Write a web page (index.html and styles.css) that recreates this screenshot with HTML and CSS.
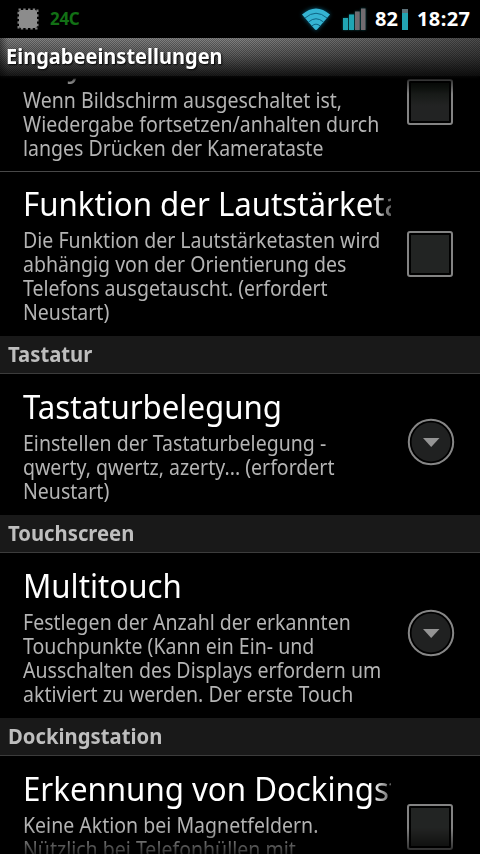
FILE: index.html
```html
<!DOCTYPE html>
<html lang="de">
<head>
    <meta charset="UTF-8">
    <meta name="viewport" content="width=device-width, initial-scale=1.0">
    <title>Eingabeeinstellungen</title>
    <link rel="stylesheet" href="styles.css">
</head>
<body>
    <div class="status-bar">
        <svg class="chip" width="24" height="24" viewBox="0 0 24 24">
            <rect x="2.500" y="2.500" width="19" height="19" fill="none" stroke="#808080" stroke-width="2" stroke-dasharray="2.400 2.350"/>
            <rect x="3" y="3" width="18" height="18" rx="2" fill="#8c8c8c"/>
        </svg>
        <span class="temp">24C</span>
        <svg class="wifi" width="32" height="26" viewBox="0 0 32 26">
            <path d="M2 8.500Q16-3.500 30 8.500L17.500 23Q16 25 14.500 23Z" fill="#35b4d3"/>
            <path d="M5 12Q16 2.500 27 12M8.500 16Q16 9.500 23.500 16M12 19.800Q16 16.500 20 19.800" fill="none" stroke="#0e6484" stroke-width="1"/>
        </svg>
        <svg class="signal" width="24" height="23" viewBox="0 0 24 23">
            <path d="M1 10h5v12H1zM7 6.500h5V22H7z" fill="#20a5b3"/>
            <path d="M13 3.500h4.700V22H13zM19 .500h4.500V22H19z" fill="#716b70"/>
        </svg>
        <span class="percent">82</span>
        <span class="battery"></span>
        <span class="clock">18:27</span>
    </div>
    <div class="title-bar"><h1>Eingabeeinstellungen</h1></div>

    <div class="list">
        <div class="row scrolled">
            <div class="text">
                <div class="name"><span>Play/Pause</span></div>
                <p>Wenn Bildschirm ausgeschaltet ist,<br>Wiedergabe fortsetzen/anhalten durch<br>langes Drücken der Kamerataste</p>
            </div>
            <span class="checkbox under-title"></span>
        </div>
        <div class="row divided">
            <div class="text">
                <div class="name long"><span>Funktion der Lautstärketasten</span></div>
                <p>Die Funktion der Lautstärketasten wird<br>abhängig von der Orientierung des<br>Telefons ausgetauscht. (erfordert<br>Neustart)</p>
            </div>
            <span class="checkbox"></span>
        </div>

        <h2><span>Tastatur</span></h2>
        <div class="row">
            <div class="text">
                <div class="name"><span>Tastaturbelegung</span></div>
                <p>Einstellen der Tastaturbelegung -<br>qwerty, qwertz, azerty... (erfordert<br>Neustart)</p>
            </div>
            <svg class="more" width="48" height="48" viewBox="0 0 48 48">
                <circle cx="24" cy="24" r="22.200" fill="#000" stroke="#868686" stroke-width="2"/>
                <circle cx="24" cy="24" r="19.500" fill="#202121"/>
                <path d="M16 20h16.500L24.200 29Z" fill="#949494"/>
            </svg>
        </div>

        <h2><span>Touchscreen</span></h2>
        <div class="row">
            <div class="text">
                <div class="name"><span>Multitouch</span></div>
                <p>Festlegen der Anzahl der erkannten<br>Touchpunkte (Kann ein Ein- und<br>Ausschalten des Displays erfordern um<br>aktiviert zu werden. Der erste Touch</p>
            </div>
            <svg class="more" width="48" height="48" viewBox="0 0 48 48">
                <circle cx="24" cy="24" r="22.200" fill="#000" stroke="#868686" stroke-width="2"/>
                <circle cx="24" cy="24" r="19.500" fill="#202121"/>
                <path d="M16 20h16.500L24.200 29Z" fill="#949494"/>
            </svg>
        </div>

        <h2><span>Dockingstation</span></h2>
        <div class="row">
            <div class="text">
                <div class="name long"><span>Erkennung von Dockingstation</span></div>
                <p>Keine Aktion bei Magnetfeldern.<br>Nützlich bei Telefonhüllen mit<br>Magneten</p>
            </div>
            <span class="checkbox"></span>
        </div>
    </div>
</body>
</html>
```

FILE: styles.css
```css
body {
    margin: 0;
    height: 854px;
    overflow: hidden;
    display: flex;
    flex-direction: column;
    background: #000;
    color: #fff;
    font-family: "Noto Sans", "Open Sans", sans-serif;
}

/* status bar */
.status-bar {
    height: 38px;
    flex: none;
    display: flex;
    align-items: center;
    box-sizing: border-box;
    padding-left: 16px;
    font-size: 20px;
    font-weight: bold;
    line-height: 38px;
}

.temp {
    margin-left: 10px;
    width: 30px;
    color: #127015;
    font-size: 17px;
    letter-spacing: -0.3px;
}

.wifi {
    margin-left: 220px;
    filter: drop-shadow(0 0 2px #08607f);
}

.signal {
    margin-left: 10px;
    filter: drop-shadow(0 0 1px #075055);
}

.percent {
    margin-left: 9px;
    width: 25px;
}

.battery {
    width: 6px;
    height: 21px;
    margin-left: 2px;
    background: linear-gradient(#5d7179 4px, #23a4b3 4px);
}

.clock {
    margin-left: 9px;
    letter-spacing: 0.4px;
}

/* title bar */
.title-bar {
    height: 38px;
    flex: none;
    position: relative;
    z-index: 1;
    background:
        repeating-conic-gradient(rgba(0, 0, 0, 0.3) 0 25%, transparent 0 50%) 0 0 / 2px 2px,
        linear-gradient(90deg, rgba(0, 0, 0, 0.4), transparent 8px, transparent 50%, rgba(0, 0, 0, 0.4)),
        linear-gradient(#858585, #5c5c5c 45%, #181818);
    box-shadow: 0 1px 3px #080808;
}

h1 {
    margin: 0;
    padding-left: 6px;
    font-size: 21px;
    line-height: 37px;
    transform: scaleX(0.953);
    transform-origin: 6px 0;
    text-shadow: 1px 1px 2px #000;
}

/* preference list */
.list {
    flex: 1;
    overflow: hidden;
    -webkit-mask-image: linear-gradient(transparent 2px, rgba(0, 0, 0, 0.4) 4px, #000 18px, #000 752px, rgba(0, 0, 0, 0.25) 778px);
    mask-image: linear-gradient(transparent 2px, rgba(0, 0, 0, 0.4) 4px, #000 18px, #000 752px, rgba(0, 0, 0, 0.25) 778px);
}

.row {
    display: flex;
    align-items: center;
    justify-content: space-between;
    padding: 13px 27px 12px 23px;
}

.row.scrolled {
    margin-top: -45px;
    padding-bottom: 11px;
}

.row.divided {
    border-top: 1px solid #484848;
    padding-top: 12px;
    padding-bottom: 12px;
}

.text {
    width: 368px;
    flex: none;
}

.name {
    height: 44px;
    overflow: hidden;
    white-space: nowrap;
    font-size: 33px;
    line-height: 40px;
}

.name span,
.row p,
h2 span {
    display: inline-block;
    white-space: nowrap;
    transform: scaleX(0.946);
    transform-origin: 0 0;
}

.name.long {
    -webkit-mask-image: linear-gradient(90deg, #000 350px, transparent 378px);
    mask-image: linear-gradient(90deg, #000 350px, transparent 378px);
}

.row p {
    display: block;
    margin: 0;
    color: #b4b4b4;
    font-size: 21px;
    line-height: 24px;
    transform: scaleX(0.93);
}

.checkbox {
    width: 38px;
    height: 38px;
    padding: 2px;
    border: 2px solid #838383;
    border-radius: 3px;
    background: #222423 content-box;
}

.checkbox.under-title {
    background: linear-gradient(#0d120d, #222323 60%) content-box;
}

.more {
    margin: -7px -2px 0 0;
}

h2 {
    margin: 0;
    height: 37px;
    padding-left: 8px;
    border-bottom: 1px solid #3c3c3c;
    background: #191919;
    color: #bebebe;
    font-size: 21px;
    line-height: 37px;
}

h2 span {
    transform: scaleX(0.965);
}
```
